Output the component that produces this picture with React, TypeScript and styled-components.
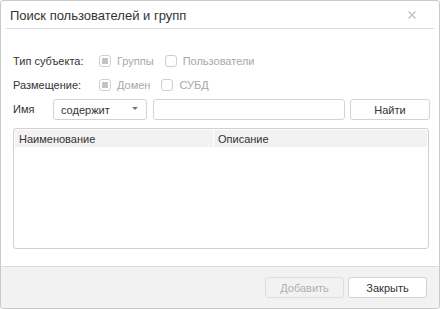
import React from 'react';
import styled, { createGlobalStyle } from 'styled-components';

const GlobalStyle = createGlobalStyle`
  html, body {
    margin: 0;
    padding: 0;
    background: #ffffff;
  }
  * {
    box-sizing: border-box;
  }
`;

const Dialog = styled.div`
  width: 440px;
  height: 309px;
  display: flex;
  flex-direction: column;
  background: #fff;
  border: 1px solid #c9c9c9;
  border-radius: 3px;
  font-family: 'Liberation Sans', Arial, sans-serif;
  font-size: 11px;
  color: #333;
  overflow: hidden;
`;

const Header = styled.div`
  height: 28px;
  margin: 0 5px;
  padding: 0 4px 0 4px;
  display: flex;
  align-items: center;
  justify-content: space-between;
  border-bottom: 1px solid #dcdcdc;
`;

const Title = styled.div`
  font-size: 13px;
  color: #333;
  padding-top: 1px;
`;

const CloseButton = styled.button`
  width: 16px;
  height: 16px;
  margin-right: 10px;
  padding: 0;
  border: none;
  background: transparent;
  display: flex;
  align-items: center;
  justify-content: center;
  cursor: pointer;
`;

const Body = styled.div`
  flex: 1;
  padding: 20px 9px 0 12px;
  display: flex;
  flex-direction: column;
`;

const Row = styled.div`
  height: 24px;
  display: flex;
  align-items: center;
`;

const Label = styled.div<{ width: number }>`
  width: ${p => p.width}px;
  flex-shrink: 0;
  color: #333;
`;

const NameLabel = styled(Label)`
  align-self: center;
  margin-top: -2px;
`;

const Options = styled.div`
  display: flex;
  align-items: center;
  gap: 11px;
`;

const Option = styled.label`
  display: flex;
  align-items: center;
  gap: 6px;
  color: #a8a8a8;
`;

const Box = styled.span<{ checked?: boolean }>`
  width: 12px;
  height: 12px;
  border: 1px solid #cfcfcf;
  border-radius: 3px;
  background: #fff;
  display: flex;
  align-items: center;
  justify-content: center;

  &::after {
    content: '';
    width: 6px;
    height: 6px;
    background: ${p => (p.checked ? '#c4c4c4' : 'transparent')};
  }
`;

const SearchRow = styled.div`
  height: 21px;
  margin-top: 2px;
  display: flex;
  align-items: stretch;
`;

const Select = styled.div`
  width: 94px;
  display: flex;
  align-items: center;
  justify-content: space-between;
  padding: 0 8px 0 7px;
  border: 1px solid #d3d3d3;
  border-radius: 3px;
  color: #333;
`;

const Caret = styled.span`
  width: 0;
  height: 0;
  border-left: 3px solid transparent;
  border-right: 3px solid transparent;
  border-top: 3px solid #777;
  margin-bottom: 3px;
`;

const Input = styled.div`
  flex: 1;
  margin-left: 6px;
  border: 1px solid #d3d3d3;
  border-radius: 3px;
`;

const Button = styled.button<{ disabled?: boolean; width: number }>`
  width: ${p => p.width}px;
  height: 21px;
  padding: 0;
  border: 1px solid ${p => (p.disabled ? '#dedede' : '#d3d3d3')};
  border-radius: 3px;
  background: ${p => (p.disabled ? '#f2f2f2' : '#fff')};
  color: ${p => (p.disabled ? '#b0b0b0' : '#333')};
  font-family: 'Liberation Sans', Arial, sans-serif;
  font-size: 11px;
`;

const FindButton = styled(Button)`
  margin-left: 5px;
`;

const Table = styled.div`
  margin-top: 8px;
  margin-right: 1px;
  height: 121px;
  border: 1px solid #d0d0d0;
  border-radius: 3px;
  padding: 1px;
  overflow: hidden;
`;

const TableHead = styled.div`
  height: 17px;
  display: grid;
  grid-template-columns: 198px 1fr;
  gap: 1px;
  background: #fff;
`;

const HeadCell = styled.div`
  background: #f2f2f2;
  padding-left: 4px;
  display: flex;
  align-items: center;
  color: #333;
`;

const Footer = styled.div`
  height: 42px;
  background: #f2f2f2;
  border-top: 1px solid #dcdcdc;
  display: flex;
  justify-content: flex-end;
  align-items: flex-start;
  gap: 4px;
  padding: 10px 12px 0 0;
`;

export default function App() {
  return (
    <>
      <GlobalStyle />
      <Dialog>
        <Header>
          <Title>Поиск пользователей и групп</Title>
          <CloseButton aria-label="Закрыть">
            <svg width="8" height="8" viewBox="0 0 8 8">
              <path d="M0.5 0.5 L7.5 7.5 M7.5 0.5 L0.5 7.5" stroke="#bcbcbc" strokeWidth="1.1" />
            </svg>
          </CloseButton>
        </Header>
        <Body>
          <Row>
            <Label width={86}>Тип субъекта:</Label>
            <Options>
              <Option><Box checked />Группы</Option>
              <Option><Box />Пользователи</Option>
            </Options>
          </Row>
          <Row>
            <Label width={86}>Размещение:</Label>
            <Options>
              <Option><Box checked />Домен</Option>
              <Option><Box />СУБД</Option>
            </Options>
          </Row>
          <SearchRow>
            <NameLabel width={40}>Имя</NameLabel>
            <Select>
              содержит
              <Caret />
            </Select>
            <Input />
            <FindButton width={80}>Найти</FindButton>
          </SearchRow>
          <Table>
            <TableHead>
              <HeadCell>Наименование</HeadCell>
              <HeadCell>Описание</HeadCell>
            </TableHead>
          </Table>
        </Body>
        <Footer>
          <Button width={79} disabled>Добавить</Button>
          <Button width={79}>Закрыть</Button>
        </Footer>
      </Dialog>
    </>
  );
}
